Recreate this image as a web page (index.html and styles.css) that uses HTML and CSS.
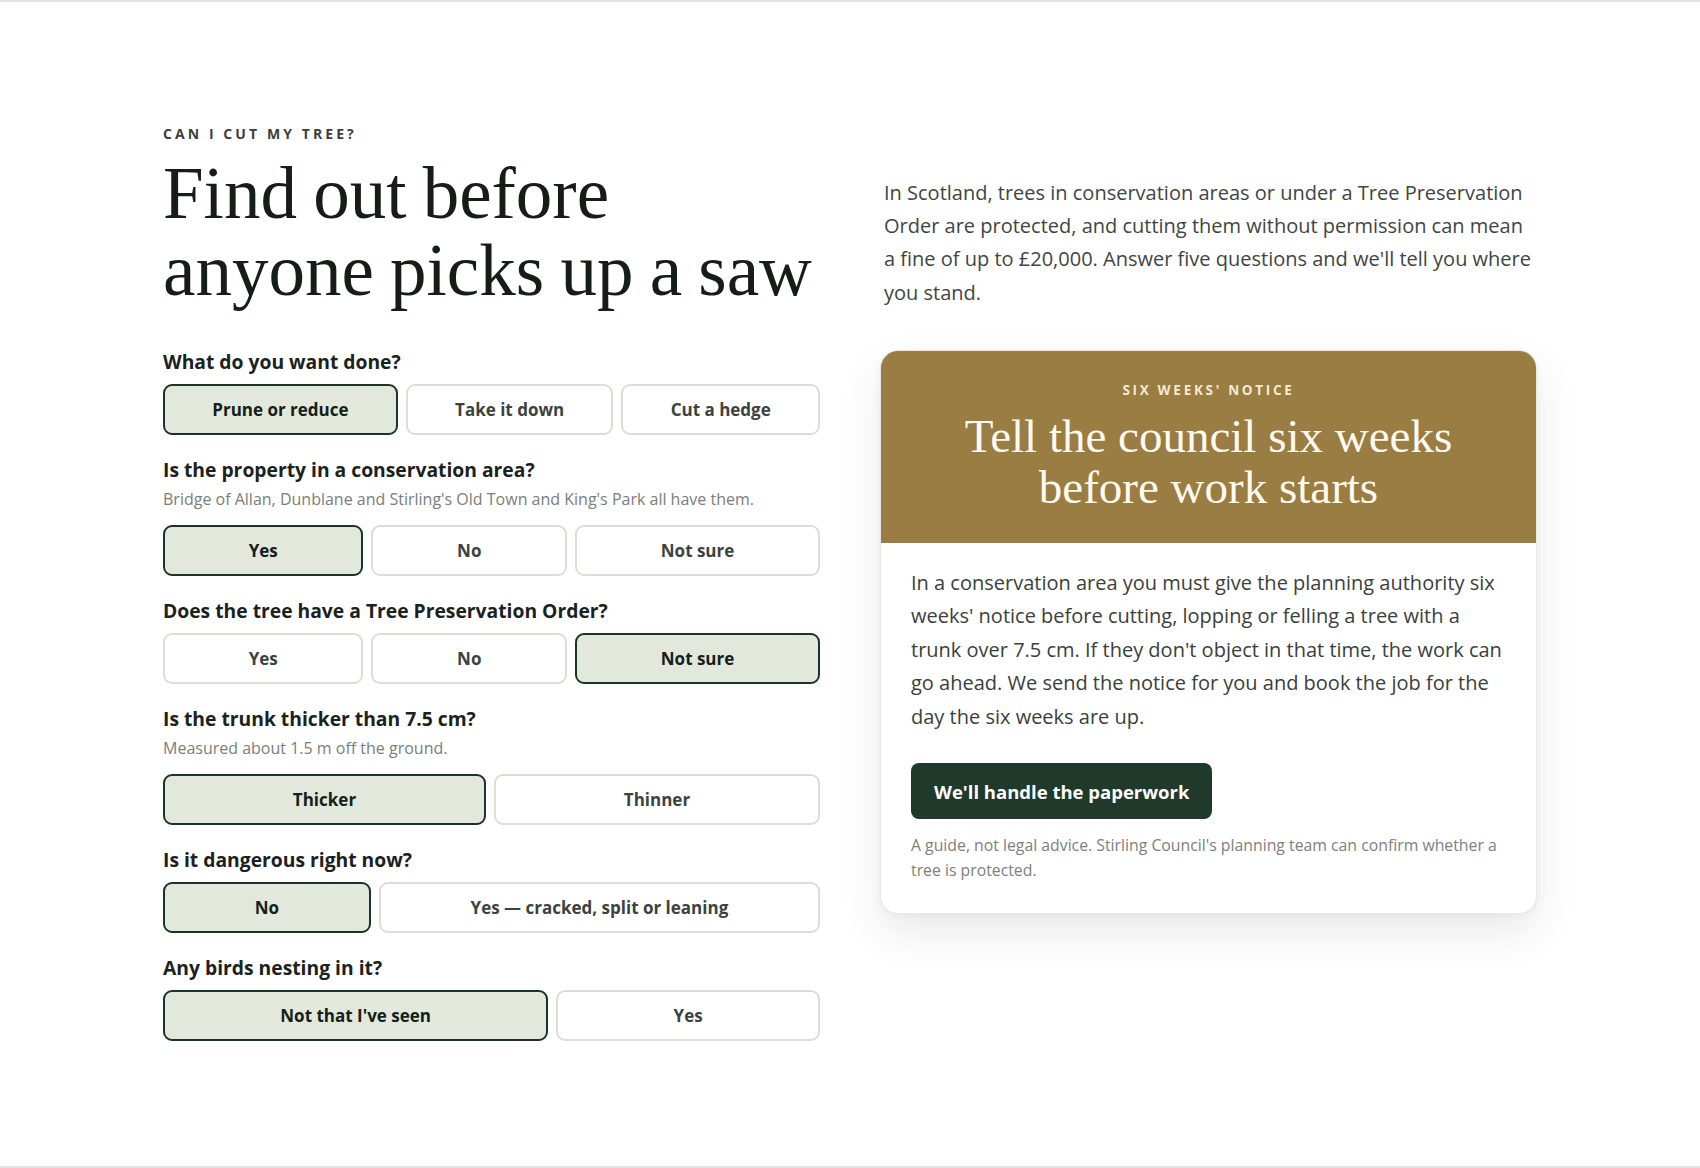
FILE: index.html
```html
<!DOCTYPE html>
<html lang="en">
<head>
<meta charset="utf-8">
<title>Can I cut my tree?</title>
<link rel="stylesheet" href="styles.css">
</head>
<body>
<div class="page">
  <main class="layout">
    <header class="intro">
      <p class="eyebrow">Can I cut my tree?</p>
      <h1 class="title">Find out before anyone picks up a saw</h1>
    </header>
    <p class="lede">In Scotland, trees in conservation areas or under a Tree Preservation Order are protected, and cutting them without permission can mean a fine of up to £20,000. Answer five questions and we'll tell you where you stand.</p>

    <form class="questions">
      <fieldset class="group">
        <legend class="q-label">What do you want done?</legend>
        <div class="options">
          <button type="button" class="opt is-selected">Prune or reduce</button>
          <button type="button" class="opt">Take it down</button>
          <button type="button" class="opt">Cut a hedge</button>
        </div>
      </fieldset>

      <fieldset class="group">
        <legend class="q-label">Is the property in a conservation area?</legend>
        <p class="q-hint">Bridge of Allan, Dunblane and Stirling's Old Town and King's Park all have them.</p>
        <div class="options">
          <button type="button" class="opt is-selected">Yes</button>
          <button type="button" class="opt">No</button>
          <button type="button" class="opt">Not sure</button>
        </div>
      </fieldset>

      <fieldset class="group">
        <legend class="q-label">Does the tree have a Tree Preservation Order?</legend>
        <div class="options">
          <button type="button" class="opt">Yes</button>
          <button type="button" class="opt">No</button>
          <button type="button" class="opt is-selected">Not sure</button>
        </div>
      </fieldset>

      <fieldset class="group">
        <legend class="q-label">Is the trunk thicker than 7.5 cm?</legend>
        <p class="q-hint">Measured about 1.5 m off the ground.</p>
        <div class="options">
          <button type="button" class="opt is-selected">Thicker</button>
          <button type="button" class="opt">Thinner</button>
        </div>
      </fieldset>

      <fieldset class="group">
        <legend class="q-label">Is it dangerous right now?</legend>
        <div class="options">
          <button type="button" class="opt is-selected">No</button>
          <button type="button" class="opt">Yes — cracked, split or leaning</button>
        </div>
      </fieldset>

      <fieldset class="group">
        <legend class="q-label">Any birds nesting in it?</legend>
        <div class="options">
          <button type="button" class="opt is-selected">Not that I've seen</button>
          <button type="button" class="opt">Yes</button>
        </div>
      </fieldset>
    </form>

    <aside class="card">
      <div class="card-head">
        <p class="card-eyebrow">Six weeks' notice</p>
        <h2 class="card-title">Tell the council six weeks before work starts</h2>
      </div>
      <div class="card-body">
        <p class="card-text">In a conservation area you must give the planning authority six weeks' notice before cutting, lopping or felling a tree with a trunk over 7.5 cm. If they don't object in that time, the work can go ahead. We send the notice for you and book the job for the day the six weeks are up.</p>
        <button type="button" class="cta">We'll handle the paperwork</button>
        <p class="disclaimer">A guide, not legal advice. Stirling Council's planning team can confirm whether a tree is protected.</p>
      </div>
    </aside>
  </main>
</div>
</body>
</html>
```

FILE: styles.css
```css
* { box-sizing: border-box; }

html, body {
  margin: 0;
  background: #ffffff;
}

body {
  font-family: "Open Sans", "Liberation Sans", sans-serif;
  color: #1c231e;
}

.page {
  height: 1168px;
  border-top: 2px solid #e4e4e2;
  border-bottom: 2px solid #e4e4e2;
  padding-top: 123px;
}

.layout {
  width: 1374px;
  margin: 0 auto;
  display: grid;
  grid-template-columns: 657px 657px;
  column-gap: 60px;
  row-gap: 41px;
}

.intro { align-self: end; }

.eyebrow {
  margin: 0 0 12px;
  font-size: 14px;
  line-height: 18px;
  font-weight: 700;
  letter-spacing: 0.22em;
  text-transform: uppercase;
  color: #3a403c;
}

.title {
  margin: 0;
  font-family: "Liberation Serif", serif;
  font-weight: 400;
  font-size: 73px;
  line-height: 77px;
  word-spacing: -2px;
  color: #161c18;
}

.lede {
  align-self: end;
  margin: 0;
  padding-left: 4px;
  font-size: 20px;
  line-height: 33.3px;
  color: #3f4542;
}

/* Questions */
.questions {
  align-self: start;
  display: flex;
  flex-direction: column;
  gap: 23px;
}

.group {
  margin: 0;
  padding: 0;
  border: 0;
  min-width: 0;
}

.q-label {
  display: block;
  padding: 0;
  margin: 0 0 10px;
  font-size: 19.3px;
  line-height: 24px;
  font-weight: 700;
  color: #1a221d;
}

.q-hint {
  margin: -3px 0 16px;
  font-size: 16px;
  line-height: 20px;
  color: #7b7d7a;
}

.options {
  display: flex;
  gap: 8px;
}

.opt {
  flex: 1 1 auto;
  height: 51px;
  padding: 0 20px;
  border: 2px solid #dddcd5;
  border-radius: 9px;
  background: #ffffff;
  font-family: inherit;
  font-size: 17px;
  font-weight: 700;
  color: #3b4340;
  cursor: pointer;
}

.opt.is-selected {
  background: #e2e9dc;
  border-color: #1c3328;
  color: #14201a;
}

/* Card */
.card {
  align-self: start;
  background: #ffffff;
  border: 1px solid #ebe8e1;
  border-radius: 18px;
  overflow: hidden;
  box-shadow: 0 18px 40px rgba(30, 40, 30, 0.10), 0 2px 6px rgba(0, 0, 0, 0.04);
}

.card-head {
  background: #9a7d42;
  padding: 30px 30px 30px;
  text-align: center;
}

.card-eyebrow {
  margin: 0 0 12px;
  font-size: 13.5px;
  line-height: 18px;
  font-weight: 700;
  letter-spacing: 0.2em;
  text-transform: uppercase;
  color: #f4ead3;
}

.card-title {
  margin: 0;
  font-family: "Liberation Serif", serif;
  font-weight: 400;
  font-size: 47px;
  line-height: 51px;
  color: #fffaf0;
}

.card-body {
  padding: 23px 26px 30px 30px;
}

.card-text {
  margin: 0 0 30px;
  font-size: 20px;
  line-height: 33.4px;
  color: #3a403c;
}

.cta {
  display: inline-block;
  height: 56px;
  padding: 0 23px;
  border: 0;
  border-radius: 8px;
  background: #1f3a2b;
  color: #ffffff;
  font-family: inherit;
  font-size: 18.5px;
  font-weight: 700;
}

.disclaimer {
  margin: 14px 0 0;
  font-size: 15.8px;
  line-height: 25px;
  color: #7e807c;
}
```
